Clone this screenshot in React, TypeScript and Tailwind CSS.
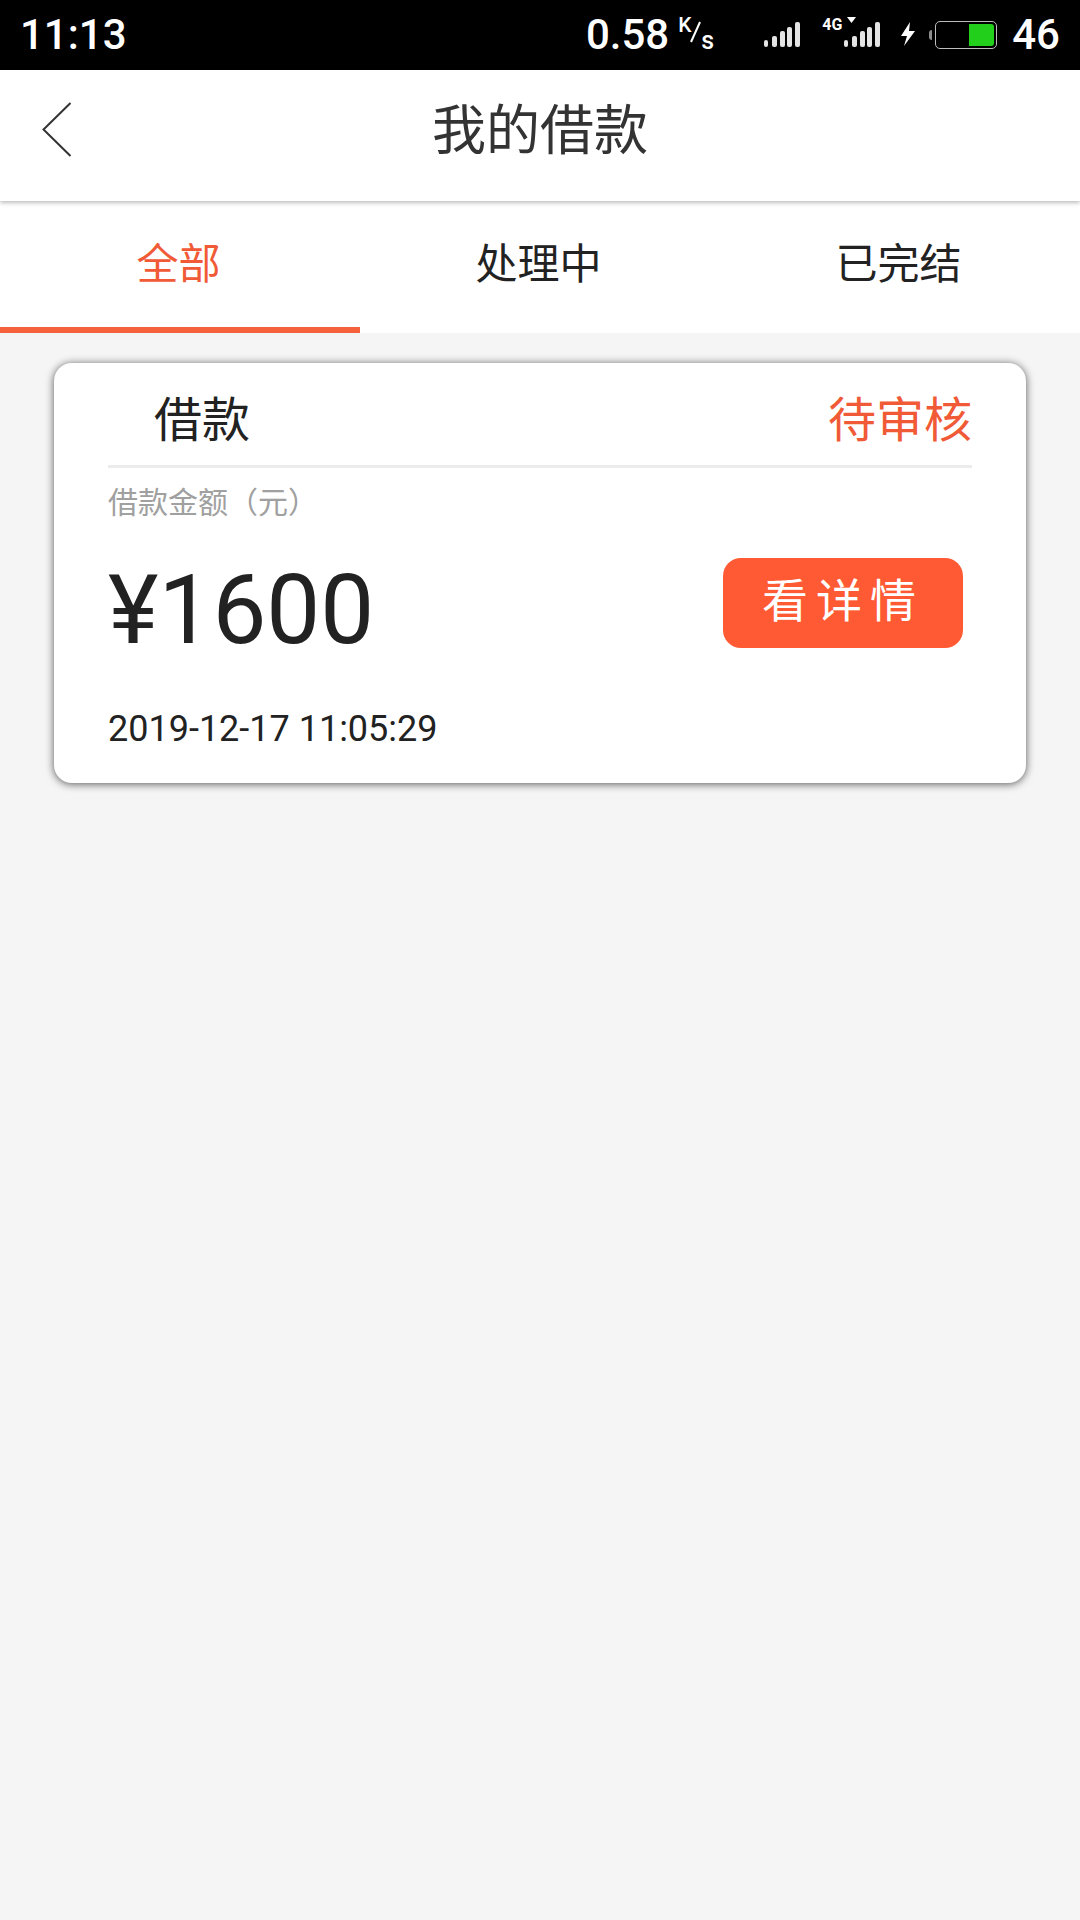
const FONT = "font-['Roboto','Noto_Sans_CJK_SC',sans-serif]";

function SignalBars({ className }: { className?: string }) {
  return (
    <svg width="36" height="26" viewBox="0 0 36 26" className={className}>
      <rect x="0" y="18" width="4" height="7" rx="2" fill="#e4e4e4" />
      <rect x="8" y="14" width="5" height="11" rx="2" fill="#e4e4e4" />
      <rect x="16" y="9" width="5" height="16" rx="2" fill="#e4e4e4" />
      <rect x="23" y="5" width="5" height="20" rx="2" fill="#e4e4e4" />
      <rect x="31" y="0" width="5" height="25" rx="2" fill="#e4e4e4" />
    </svg>
  );
}

function StatusBar() {
  return (
    <div className="h-[70px] bg-black text-white flex items-center relative">
      <span className="ml-[20px] text-[42px] leading-none font-medium">11:13</span>
      <div className="ml-auto flex items-center h-full">
        <span className="text-[42px] leading-none font-medium">0.58</span>
        <span className="ml-[9px] mt-[-4px] text-[21px] leading-none font-medium relative w-[38px] h-[36px]">
          <span className="absolute left-0 top-0">K</span>
          <svg width="16" height="24" viewBox="0 0 16 24" className="absolute left-[11px] top-[6px]">
            <line x1="2" y1="21" x2="11" y2="1" stroke="#fff" strokeWidth="2" />
          </svg>
          <span className="absolute left-[23px] top-[13px] text-[25px]">s</span>
        </span>
        <SignalBars className="ml-[48px] mt-[-1px]" />
        <div className="ml-[44px] relative w-[36px] h-[26px] mt-[-1px]">
          <SignalBars />
          <span className="absolute left-[-22px] top-[-5px] text-[16px] leading-none font-bold">4G</span>
          <svg width="9" height="6" viewBox="0 0 9 6" className="absolute left-[3px] top-[-5px]">
            <polygon points="0,0 9,0 4.5,6" fill="#fff" />
          </svg>
        </div>
        <svg width="16" height="24" viewBox="0 0 16 24" className="ml-[20px] mt-[-2px]">
          <polygon points="10,0 1,14 7,14 4,24 15,9 9,9" fill="#fff" />
        </svg>
        <div className="ml-[13px] w-[3px] h-[10px] rounded-l-full bg-[#8c8c8c]" />
        <div className="ml-[3px] w-[62px] h-[28px] rounded-[5px] border border-[#bdbdbd] p-[2px] flex justify-end mt-[-1px]">
          <div className="w-[25px] bg-[#22d01c] rounded-r-[3px]" />
        </div>
        <span className="ml-[15px] mr-[20px] text-[42px] leading-none font-medium">46</span>
      </div>
    </div>
  );
}

function Tabs() {
  return (
    <div className="h-[132px] bg-white grid grid-cols-3 text-[42px] text-[#222222]">
      <div className="flex items-center justify-center text-[#f15a36] border-b-[6px] border-[#f4613a] pt-[6px]">
        <span className="mt-[-5px] mr-[3px]">全部</span>
      </div>
      <div className="flex items-center justify-center">
        <span className="mt-[-5px] mr-[3px]">处理中</span>
      </div>
      <div className="flex items-center justify-center">
        <span className="mt-[-5px] mr-[3px]">已完结</span>
      </div>
    </div>
  );
}

function LoanCard() {
  return (
    <div className="h-[420px] rounded-[18px] bg-white shadow-[0_1px_9px_rgba(0,0,0,0.65)] px-[54px]">
      <div className="h-[105px] flex items-center justify-between border-b-[3px] border-[#ececec] text-[48px] pt-[14px]">
        <span className="ml-[46px] text-[#222222]">借款</span>
        <span className="text-[#f15a36]">待审核</span>
      </div>
      <div className="mt-[15px] text-[30px] leading-[40px] text-[#a0a0a0]">借款金额（元）</div>
      <div className="mt-[32px] flex items-center justify-between h-[110px]">
        <span className="text-[96px] leading-none text-[#222222]">¥1600</span>
        <button className="mr-[9px] mt-[-15px] w-[240px] h-[90px] rounded-[18px] bg-[#ff5a33] text-white text-[46px] tracking-[8px] pb-[2px] flex items-center justify-center">
          看详情
        </button>
      </div>
      <div className="mt-[39px] text-[36px] leading-[50px] text-[#222222]">2019-12-17 11:05:29</div>
    </div>
  );
}

export default function App() {
  return (
    <div className={`w-[1080px] h-[1920px] bg-[#f5f5f5] overflow-hidden ${FONT}`}>
      <StatusBar />
      <div className="h-[131px] bg-white relative z-10 shadow-[0_2px_4px_rgba(0,0,0,0.25)] flex items-center justify-center">
        <svg width="30" height="56" viewBox="0 0 30 56" className="absolute left-[42px] top-[32px]">
          <polyline points="28.5,1 1.5,27.5 28.5,54" fill="none" stroke="#333333" strokeWidth="2" />
        </svg>
        <span className="text-[54px] text-[#333333] mt-[-9px]">我的借款</span>
      </div>
      <Tabs />
      <div className="px-[54px] pt-[30px]">
        <LoanCard />
      </div>
    </div>
  );
}
